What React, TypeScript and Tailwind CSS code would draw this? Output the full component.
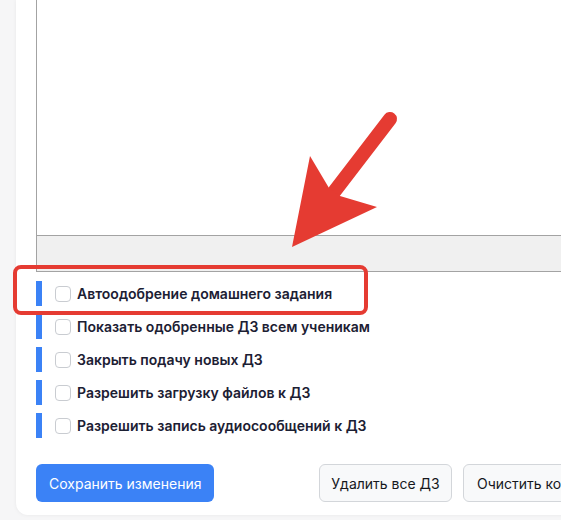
import React from "react";

const options = [
  "Автоодобрение домашнего задания",
  "Показать одобренные ДЗ всем ученикам",
  "Закрыть подачу новых ДЗ",
  "Разрешить загрузку файлов к ДЗ",
  "Разрешить запись аудиосообщений к ДЗ",
];

const OptionRow = ({ label }: { label: string }) => {
  return (
    <label className="flex h-[25px] items-center border-l-[6px] border-[#3b82f6] pl-[13px]">
      <span className="h-4 w-4 shrink-0 rounded-[4px] border border-[#c9ccd1] bg-white"></span>
      <span className="ml-[6px] text-[14px] font-semibold text-[#1c2033]">{label}</span>
    </label>
  );
};

const Arrow = () => {
  return (
    <svg className="pointer-events-none absolute left-0 top-0" width="561" height="520" viewBox="0 0 561 520">
      <line x1="390" y1="119" x2="334" y2="192" stroke="#e53b32" strokeWidth="14" strokeLinecap="round" />
      <polygon points="292,247 310,156 329,188 340,196 377,207" fill="#e53b32" />
    </svg>
  );
};

export default function App() {
  return (
    <div className="relative h-[520px] w-[561px] overflow-hidden bg-[#f6f6f7]" style={{ fontFamily: "Inter, 'Noto Sans', sans-serif" }}>
      <div className="ml-4 w-[647px] rounded-b-xl bg-white px-5 pb-[13px] shadow-[0_0_4px_rgba(0,0,0,0.06)]">
        <div className="border-x border-b border-[#a3a3a3]">
          <div className="h-[235px] bg-white"></div>
          <div className="h-[36px] border-t border-[#a3a3a3] bg-[#f0f0f0]"></div>
        </div>

        <div className="mt-[9px] flex flex-col gap-2">
          {options.map((o) => (
            <OptionRow key={o} label={o} />
          ))}
        </div>

        <div className="mt-[26px] flex justify-between">
          <button className="h-[38px] rounded-md bg-[#3b82f6] px-[13px] text-[14px] text-white">
            Сохранить изменения
          </button>
          <div className="flex gap-[11px]">
            <button className="h-[38px] w-[133px] rounded-md border border-[#d3d6da] bg-[#f8f9fa] text-[14px] text-[#16181d]">
              Удалить все ДЗ
            </button>
            <button className="h-[38px] w-[180px] whitespace-nowrap rounded-md border border-[#d3d6da] bg-[#f8f9fa] px-[13px] text-left text-[14px] text-[#16181d]">
              Очистить комментарии
            </button>
          </div>
        </div>
      </div>

      <div className="pointer-events-none absolute left-[13px] top-[265px] h-[50px] w-[355px] rounded-lg border-4 border-[#e53b32]"></div>
      <Arrow />
    </div>
  );
}
